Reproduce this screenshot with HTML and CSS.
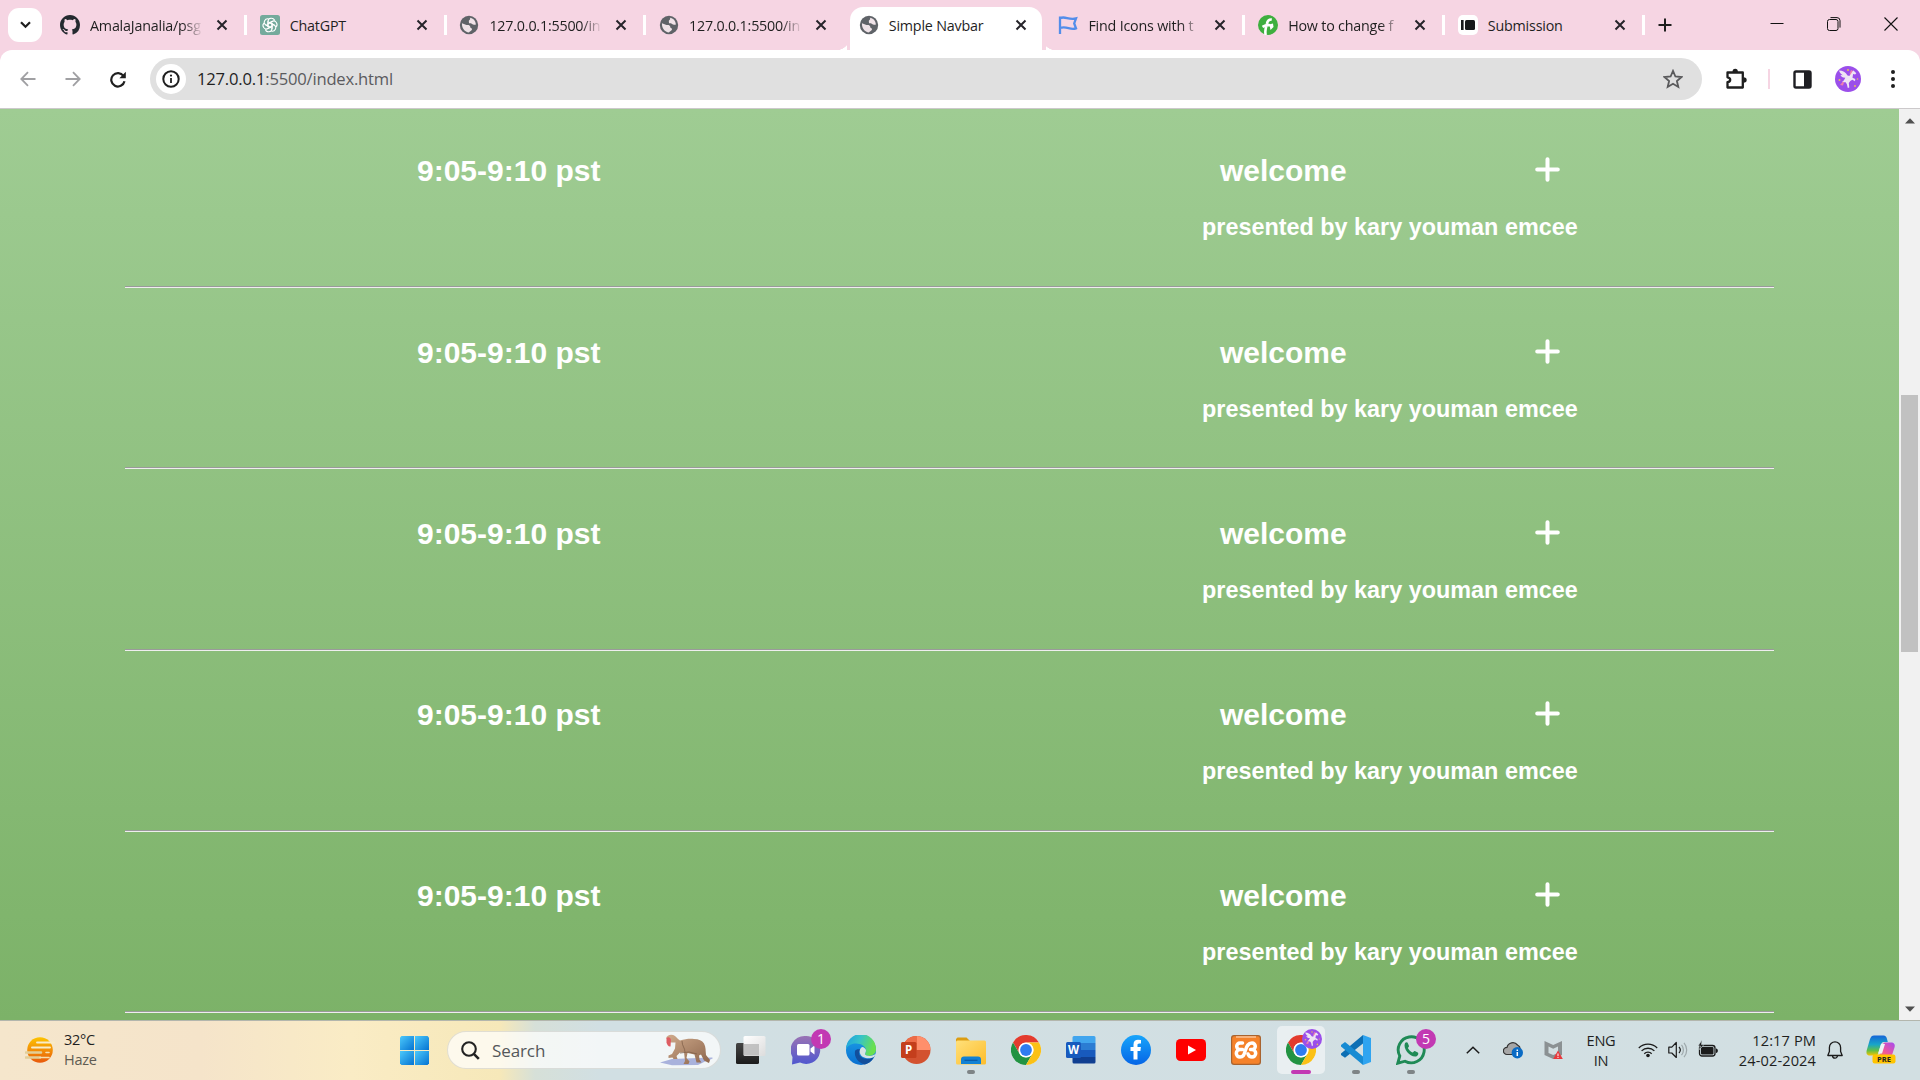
FILE: index.html
```html
<!DOCTYPE html>
<html lang="en">
<head>
<meta charset="utf-8">
<title>Simple Navbar</title>
<link rel="stylesheet" href="styles.css">
</head>
<body>
<svg class="defs" width="0" height="0" aria-hidden="true">
  <defs>
    <linearGradient id="gWin" x1="0" y1="0" x2="1" y2="1"><stop offset="0" stop-color="#4cc9fb"/><stop offset="1" stop-color="#0573d2"/></linearGradient>
    <linearGradient id="gSun" x1="0" y1="0" x2="0" y2="1"><stop offset="0" stop-color="#fdc400"/><stop offset="1" stop-color="#e8590c"/></linearGradient>
    <linearGradient id="gDark" x1="0" y1="0" x2="0" y2="1"><stop offset="0" stop-color="#454545"/><stop offset="1" stop-color="#1b1b1b"/></linearGradient>
    <linearGradient id="gLight" x1="0" y1="0" x2="1" y2="1"><stop offset="0" stop-color="#fff"/><stop offset="1" stop-color="#dcdcdc"/></linearGradient>
    <linearGradient id="gTeams" x1="0" y1="0" x2="0" y2="1"><stop offset="0" stop-color="#9a73b4"/><stop offset="1" stop-color="#4f57cf"/></linearGradient>
    <linearGradient id="gEdgeTop" x1="0" y1="0" x2="1" y2=".3"><stop offset="0" stop-color="#1b9de2"/><stop offset=".5" stop-color="#36c3c8"/><stop offset="1" stop-color="#6ae04e"/></linearGradient>
    <linearGradient id="gEdge" x1="0" y1="0" x2="0" y2="1"><stop offset="0" stop-color="#1ca0e8"/><stop offset="1" stop-color="#0a6fd0"/></linearGradient>
    <linearGradient id="gFolder" x1="0" y1="0" x2="1" y2="1"><stop offset="0" stop-color="#ffe07a"/><stop offset="1" stop-color="#fdbd2c"/></linearGradient>
    <linearGradient id="gFb" x1="0" y1="0" x2="0" y2="1"><stop offset="0" stop-color="#18a5fb"/><stop offset="1" stop-color="#0565e6"/></linearGradient>
    <linearGradient id="gCop1" x1="0" y1="0" x2="0" y2="1"><stop offset="0" stop-color="#1565d8"/><stop offset=".45" stop-color="#18a5c8"/><stop offset=".75" stop-color="#62bf46"/><stop offset="1" stop-color="#f5c400"/></linearGradient>
    <linearGradient id="gCop2" x1="1" y1="0" x2="0" y2="1"><stop offset="0" stop-color="#a44cf0"/><stop offset=".55" stop-color="#f0569c"/><stop offset="1" stop-color="#fb8a3c"/></linearGradient>
    <linearGradient id="gMonkey" x1="0" y1="0" x2="1" y2="1"><stop offset="0" stop-color="#d0ab8c"/><stop offset="1" stop-color="#8c654c"/></linearGradient>
    <symbol id="close" viewBox="0 0 12 12"><path d="M1.500 1.500l9 9M10.500 1.500l-9 9" stroke="#26242a" stroke-width="2" fill="none"/></symbol>
    <symbol id="globe" viewBox="0 0 20 20"><circle cx="10" cy="10" r="9.200" fill="#5f6368"/><path d="M3 8.200l3.800 1.600c1.600.6 2.300-.2 3.600.6 1.300.9.600 2.600 2 2.900 1.300.4.400 2.400-1 2.900-1 .4-.800 1-2 1.200C5.500 16.500 2.600 13 3 8.200z" fill="#efe3e8"/><path d="M10.800 2.800c1.200 1.200-.2 2-.8 2.700-.7.900.5 1.500-.2 2.200.8.900 2.400.2 3.100 1.100.700 1 2.300 1.100 4 .7C16.500 5.700 14.200 3.200 10.800 2.800z" fill="#efe3e8"/></symbol>
    <symbol id="chrome" viewBox="0 0 30 30">
      <circle cx="15" cy="15" r="15" fill="#fff"/>
      <path d="M2 7.500A15 15 0 0 1 28 7.500H15A7.500 7.500 0 0 0 8.500 18.700z" fill="#e33b2e"/>
      <path d="M2 7.500A15 15 0 0 0 15 30l6.500-11.200A7.500 7.500 0 0 1 8.500 18.700z" fill="#229342"/>
      <path d="M28 7.500A15 15 0 0 1 15 30l6.500-11.200A7.500 7.500 0 0 0 15 7.500z" fill="#fbc116"/>
      <circle cx="15" cy="15" r="7.300" fill="#fff"/><circle cx="15" cy="15" r="5.900" fill="#2f7cf0"/>
    </symbol>
    <symbol id="pegasus" viewBox="0 0 26 26"><circle cx="13" cy="13" r="13" fill="#9b4fea"/><path d="M4 4.500c4 0 6.500 1.500 8.500 5l2 .5 1.500-4 2.500-1.500 2.800 2.800-1.200 1.200-2-.4-.6 3.600 2.800 1.200-.3 2.300-2.700-1.500-2 1.300-1.500 2 .5 4.500-1.500.5-1-4-1.500-2c-1 .5-2 .5-3.300 0 1.500-1 2.500-2.500 3.300-4.300C7.500 11.700 6 10.500 5.500 9l2.300.3C6 8 4.600 6.500 4 4.500z" fill="#eee5f3"/><path d="M14.500 8l1.500-4 1.800.8-2.300 4zM8 15.500l-3 3.500 3 .5 1-3z" fill="#ef7fae"/><g fill="#e5bf5a"><circle cx="4.500" cy="14" r="1"/><circle cx="20" cy="20" r="1"/><circle cx="13" cy="4" r="1"/><circle cx="22.500" cy="13" r=".8"/></g></symbol>
  </defs>
</svg>

<header class="tabstrip">
  <div class="tab-search"><svg width="11" height="8" viewBox="0 0 11 8"><path d="M1 1.200l4.500 4.600L10 1.200" fill="none" stroke="#1f1f1f" stroke-width="2.200"/></svg></div>
  <div class="tabs">
    <div class="tab">
      <svg class="favicon" viewBox="0 0 16 16"><path fill="#24292f" d="M8 0C3.580 0 0 3.580 0 8c0 3.540 2.290 6.530 5.470 7.590.4.070.55-.17.55-.38 0-.19-.01-.82-.01-1.490-2.010.37-2.530-.49-2.690-.94-.09-.23-.48-.94-.82-1.130-.28-.15-.68-.52-.01-.53.63-.01 1.080.58 1.230.82.72 1.210 1.870.87 2.330.66.07-.52.28-.87.51-1.070-1.780-.2-3.640-.89-3.640-3.950 0-.87.31-1.590.82-2.150-.08-.2-.36-1.020.08-2.120 0 0 .67-.21 2.200.82.64-.18 1.320-.27 2-.27s1.360.09 2 .27c1.530-1.040 2.200-.82 2.200-.82.44 1.100.16 1.920.08 2.120.51.56.82 1.270.82 2.150 0 3.070-1.870 3.750-3.650 3.950.29.25.54.73.54 1.480 0 1.070-.01 1.930-.01 2.200 0 .21.15.46.55.38A8.010 8.010 0 0 0 16 8c0-4.420-3.580-8-8-8z"/></svg>
      <span class="title fade">AmalaJanalia/psg</span><svg class="x"><use href="#close"/></svg>
    </div>
    <div class="tab">
      <svg class="favicon" viewBox="0 0 20 20"><rect width="20" height="20" rx="2.500" fill="#74aa9c"/><g fill="none" stroke="#fff" stroke-width="1.100"><path id="petal" d="M8 12.200V6.500c0-4.200 5.800-4.200 6.600-.8M8 8.800l4.500-2.500"/><use href="#petal" transform="rotate(60 10 10)"/><use href="#petal" transform="rotate(120 10 10)"/><use href="#petal" transform="rotate(180 10 10)"/><use href="#petal" transform="rotate(240 10 10)"/><use href="#petal" transform="rotate(300 10 10)"/></g></svg>
      <span class="title">ChatGPT</span><svg class="x"><use href="#close"/></svg>
    </div>
    <div class="tab"><svg class="favicon"><use href="#globe"/></svg><span class="title fade">127.0.0.1:5500/in</span><svg class="x"><use href="#close"/></svg></div>
    <div class="tab plain"><svg class="favicon"><use href="#globe"/></svg><span class="title fade">127.0.0.1:5500/in</span><svg class="x"><use href="#close"/></svg></div>
    <div class="tab active"><svg class="favicon"><use href="#globe"/></svg><span class="title">Simple Navbar</span><svg class="x"><use href="#close"/></svg></div>
    <div class="tab">
      <svg class="favicon" viewBox="0 0 20 20"><path d="M2 1.500v17.500M2 3.200c5-2.700 8.500 2.200 16 .2l-1.800 5 1.800 5c-6 2.200-9-2.700-16-.4" fill="none" stroke="#538dea" stroke-width="2.300"/></svg>
      <span class="title fade">Find Icons with t</span><svg class="x"><use href="#close"/></svg>
    </div>
    <div class="tab">
      <svg class="favicon" viewBox="0 0 20 20"><circle cx="10" cy="10" r="10" fill="#3eaf3f"/><path d="M7.800 20c-1.500-4 .4-8 1.200-11.500.6-3 2.200-4.200 4.800-4M4.500 11.800c2.500-1.500 5-2 8-1.500" fill="none" stroke="#fff" stroke-width="2.600"/><path d="M11.500 9.500l3.500-1 .5 3.500-3 3z" fill="#fff"/></svg>
      <span class="title fade">How to change f</span><svg class="x"><use href="#close"/></svg>
    </div>
    <div class="tab">
      <svg class="favicon" viewBox="0 0 20 20"><rect width="20" height="20" rx="5" fill="#fff"/><rect x="3" y="5" width="2.600" height="10" fill="#17181a"/><rect x="7" y="5" width="10" height="10" rx="1.500" fill="#17181a"/></svg>
      <span class="title">Submission</span><svg class="x"><use href="#close"/></svg>
    </div>
  </div>
  <svg class="newtab" width="14" height="14" viewBox="0 0 14 14"><path d="M7 .5v13M.5 7h13" stroke="#1f1f1f" stroke-width="2"/></svg>
  <div class="win-controls">
    <svg width="14" height="14" viewBox="0 0 14 14"><path d="M.5 6.500h13" stroke="#111" stroke-width="1"/></svg>
    <svg width="14" height="14" viewBox="0 0 14 14" fill="none" stroke="#111"><rect x=".5" y="2.500" width="10.500" height="11" rx="2"/><path d="M3.500.6h6.500a3 3 0 0 1 3 3v7"/></svg>
    <svg width="14" height="14" viewBox="0 0 14 14"><path d="M.5.500l13 13M13.500.5l-13 13" stroke="#111" stroke-width="1.100"/></svg>
  </div>
</header>

<nav class="toolbar">
  <div class="nav-buttons">
    <svg width="16" height="16" viewBox="0 0 16 16"><path d="M15.500 8H1.500M8 1.200L1.300 8 8 14.800" fill="none" stroke="#a0a0a3" stroke-width="1.800"/></svg>
    <svg width="16" height="16" viewBox="0 0 16 16"><path d="M.5 8h14M8 1.200L14.700 8 8 14.800" fill="none" stroke="#a0a0a3" stroke-width="1.800"/></svg>
    <svg width="17" height="17" viewBox="0 0 17 17"><path d="M13.500 5A6.700 6.700 0 1 0 14.500 10.300" fill="none" stroke="#1f1f1f" stroke-width="2.200"/><path d="M15.800.8v6.400H9.400z" fill="#1f1f1f"/></svg>
  </div>
  <div class="omnibox">
    <span class="info"><svg width="18" height="18" viewBox="0 0 18 18"><circle cx="9" cy="9" r="7.700" fill="none" stroke="#1f1f1f" stroke-width="2"/><path d="M9 8v5" stroke="#1f1f1f" stroke-width="1.800"/><circle cx="9" cy="5.600" r="1.100" fill="#1f1f1f"/></svg></span>
    <span class="url"><b>127.0.0.1</b>:5500/index.html</span>
    <svg class="star" width="20" height="20" viewBox="0 0 20 20"><path d="M10 1.900l2.400 5.600 6.100.5-4.600 4 1.400 6-5.300-3.200-5.300 3.200 1.400-6-4.600-4 6.100-.5z" fill="none" stroke="#5a5a5c" stroke-width="1.800"/></svg>
  </div>
  <div class="actions">
    <svg width="22" height="22" viewBox="0 0 22 22"><path d="M2.500 4.500h15.300v15H2.500v-5.300c3.600-.5 3.600-4.400 0-4.900z" fill="none" stroke="#1f1f1f" stroke-width="2.300" stroke-linejoin="round"/><path d="M7.500 4a2.700 3.200 0 0 1 5.400 0zM18.500 9.300a3.200 2.700 0 0 1 0 5.400z" fill="#1f1f1f"/></svg>
    <span class="divider"></span>
    <svg width="19" height="19" viewBox="0 0 19 19"><rect x="1.500" y="1.500" width="16" height="16" rx="1.500" fill="#fff" stroke="#1f1f23" stroke-width="2.400"/><path d="M11 1h7v17h-7z" fill="#1f1f23"/></svg>
    <svg width="26" height="26"><use href="#pegasus"/></svg>
    <svg width="4" height="18" viewBox="0 0 4 18" fill="#1f1f1f"><circle cx="2" cy="2" r="2"/><circle cx="2" cy="9" r="2"/><circle cx="2" cy="16" r="2"/></svg>
  </div>
</nav>

<div class="viewport">
  <main class="schedule">
    <section class="slot"><h2 class="time">9:05-9:10 pst</h2><h2 class="event">welcome</h2><svg class="plus" viewBox="0 0 25 25"><path d="M12.500 2.200v20.600M2.200 12.500h20.600"/></svg><h3 class="host">presented by kary youman emcee</h3></section>
    <section class="slot"><h2 class="time">9:05-9:10 pst</h2><h2 class="event">welcome</h2><svg class="plus" viewBox="0 0 25 25"><path d="M12.500 2.200v20.600M2.200 12.500h20.600"/></svg><h3 class="host">presented by kary youman emcee</h3></section>
    <section class="slot"><h2 class="time">9:05-9:10 pst</h2><h2 class="event">welcome</h2><svg class="plus" viewBox="0 0 25 25"><path d="M12.500 2.200v20.600M2.200 12.500h20.600"/></svg><h3 class="host">presented by kary youman emcee</h3></section>
    <section class="slot"><h2 class="time">9:05-9:10 pst</h2><h2 class="event">welcome</h2><svg class="plus" viewBox="0 0 25 25"><path d="M12.500 2.200v20.600M2.200 12.500h20.600"/></svg><h3 class="host">presented by kary youman emcee</h3></section>
    <section class="slot"><h2 class="time">9:05-9:10 pst</h2><h2 class="event">welcome</h2><svg class="plus" viewBox="0 0 25 25"><path d="M12.500 2.200v20.600M2.200 12.500h20.600"/></svg><h3 class="host">presented by kary youman emcee</h3></section>
  </main>
  <aside class="scrollbar">
    <svg width="10" height="6" viewBox="0 0 10 6"><path d="M0 5.500L5 .3l5 5.200z" fill="#505050"/></svg>
    <div class="track"><div class="thumb"></div></div>
    <svg width="10" height="6" viewBox="0 0 10 6"><path d="M0 .5l5 5.200L10 .5z" fill="#505050"/></svg>
  </aside>
</div>

<footer class="taskbar">
  <div class="weather">
    <svg width="30" height="28" viewBox="0 0 30 28"><circle cx="15" cy="14" r="12.800" fill="url(#gSun)"/><g stroke-linecap="round" fill="none"><path d="M12 6.500h17M7 11.500h18" stroke="#f8ecc9" stroke-width="1.900"/><path d="M1 16.500h15M1 21.500h14" stroke="#e2ce98" stroke-width="2.600"/><path d="M15 21.500h9M21 16.500h3" stroke="#f6dfae" stroke-width="1.600"/></g></svg>
    <p>32°C<br><span>Haze</span></p>
  </div>
  <svg class="start" width="29" height="29" viewBox="0 0 29 29"><g fill="url(#gWin)"><path d="M1.500 0H14v14H0V1.500z"/><path d="M15 0h12.500L29 1.500V14H15z"/><path d="M0 15h14v14H1.500L0 27.500z"/><path d="M15 15h14v12.500L27.500 29H15z"/></g></svg>
  <div class="search">
    <svg width="19" height="19" viewBox="0 0 19 19"><circle cx="8" cy="8" r="6.800" fill="none" stroke="#222" stroke-width="2.100"/><path d="M12.800 12.800l5 5" stroke="#222" stroke-width="2.600"/></svg>
    <span>Search</span>
    <svg class="monkey" width="54" height="34" viewBox="0 0 54 34"><path d="M0 29.500l12-3.500 40-1.500c3 1-4 3-6 3.500l-8 4-26 .3z" fill="#a9b2dc"/><path d="M6 5.500C7 1.500 12 1 15 3c2 1.500 3 3.500 5 4.500 5-1.500 10-2 14-1.500 5 0 8 1.500 10 4.500 2 3.500 1.500 7.500 2 11.500l4 5-1 3-5-2.500-3-6-2 1 .5 4 2 3h-5l-2-8-7-1.500-1 5 3 3.500-1 2.500h-5l1.500-3-1-9-4 .5-3.500 3.500 1 3h-4l-1-1.500-4 .5v-2.500l3.500-1.500 3-5.500.5-6c-4 .5-8-.5-8.500-4z" fill="url(#gMonkey)"/><path d="M6.500 5c2-1.500 4-.5 4.500 2l-.5 6.500c-2 .5-3.500-2-4-4z" fill="#de5c62"/><path d="M20 20l9-1 8 2M22 8c0 5 3 7 3 11" fill="none" stroke="#806049" stroke-width=".8"/></svg>
  </div>
  <div class="apps">
    <div class="app"><svg viewBox="0 0 30 30"><rect y="8" width="23" height="21" rx="1.500" fill="url(#gDark)"/><rect x="7.500" y="1" width="22" height="20" rx="1.500" fill="url(#gLight)"/><path d="M8 9h15v11.500H8z" fill="#b6b6b6" opacity=".8"/></svg></div>
    <div class="app"><svg viewBox="0 0 30 30"><path d="M14 1a14 14 0 1 1-5 26.500L1 29.500 1.500 22A14 14 0 0 1 14 1z" fill="url(#gTeams)"/><rect x="6" y="9" width="12.500" height="11.500" rx="1.500" fill="#fff"/><path d="M19.500 13.500l4-3v9l-4-3z" fill="#fff"/></svg><span class="badge">1</span></div>
    <div class="app"><svg viewBox="0 0 30 30"><circle cx="15" cy="15" r="15" fill="url(#gEdge)"/><path d="M0 14A15 15 0 0 1 30 14c.3 6-5.500 8-9.500 6.500-3-1.200-.5-2.500-.5-5C20 8 5 5 0 14z" fill="url(#gEdgeTop)"/><path d="M9 16c-1 6 3 12 10 13.400 5-1.400 7.500-4.400 9-7.400-5 3-12 2.500-14.500-2-1-2 0-4.500 1.500-5.500-3-.7-5.400 0-6 1.500z" fill="#124f9c"/><path d="M16 12c-3.500 2.500-3 8 1 10 4 2 8 1.300 11 0l2.500-4c-2.500 2.500-6 3.500-10 2.500-3-1.200-.5-2.500-.5-5 0-1.500-2-3.500-4-3.500z" fill="#d6e2e4"/></svg></div>
    <div class="app"><svg viewBox="0 0 30 30"><circle cx="15.500" cy="15" r="14" fill="#d35230"/><path d="M15.500 1a14 14 0 0 1 14 14h-14z" fill="#ff8f6b"/><path d="M15.500 1v14h-14a14 14 0 0 1 14-14z" fill="#ed6c47"/><rect y="7" width="15.500" height="16" rx="1.500" fill="#c43e1c"/><text x="7.600" y="19.300" class="letter">P</text></svg></div>
    <div class="app"><svg viewBox="0 0 30 30"><path d="M1.500 2.500h9l3 3v4H0V4z" fill="#dc9d12"/><rect y="5.500" width="30" height="24" rx="1.500" fill="url(#gFolder)"/><path d="M5 29v-4.500a3 3 0 0 1 3-3h14a3 3 0 0 1 3 3V29z" fill="#1181d4"/><path d="M8.500 25.300h13" stroke="#0a58a4" stroke-width="1.200"/></svg><i class="dot"></i></div>
    <div class="app"><svg><use href="#chrome"/></svg></div>
    <div class="app"><svg viewBox="0 0 30 30"><path d="M6.500 2.500A1.500 1.500 0 0 1 8 1h20a1.500 1.500 0 0 1 1.500 1.500V8h-23z" fill="#41a5ee"/><path d="M6.500 8h23v7h-23z" fill="#2b7cd3"/><path d="M6.500 15h23v7h-23z" fill="#185abd"/><path d="M6.500 22h23v5a1.500 1.500 0 0 1-1.500 1.500H8A1.500 1.500 0 0 1 6.500 27z" fill="#103f91"/><rect y="7" width="15" height="16" rx="1.500" fill="#185abd"/><text x="7.500" y="19" class="letter">W</text></svg></div>
    <div class="app"><svg viewBox="0 0 30 30"><circle cx="15" cy="15" r="15" fill="url(#gFb)"/><path d="M12.500 24.500V16h-3v-4h3V9.500c0-3.300 2-4.700 4.500-4.700l3 .2v3.400h-1.700c-1.500 0-1.800.8-1.800 1.800V12h3.400l-.5 4h-2.900v8.500z" fill="#fff"/></svg></div>
    <div class="app"><svg viewBox="0 0 30 30"><rect y="4" width="30" height="22" rx="4.500" fill="#f00"/><path d="M12 10.500l8 4.500-8 4.500z" fill="#fff"/></svg></div>
    <div class="app"><svg viewBox="0 0 30 30"><rect width="30" height="30" rx="3" fill="#a8632f"/><rect x="1.200" y="1.200" width="27.600" height="27.600" rx="2" fill="#f5822a"/><path d="M5 2h20" stroke="#f8b27c" stroke-width="2"/><path d="M11.500 8H9a3.200 3.200 0 0 0 0 6.600h2.500M9 14.600a3.700 3.700 0 0 0 0 7.400c4 0 4-3 5.500-7 1.300-4 2.500-7 6.500-7a3.300 3.300 0 0 1 0 6.600h-1.500M21 14.600a3.700 3.700 0 0 1 0 7.400c-2.500 0-3.500-1.500-4-3" fill="none" stroke="#fff" stroke-width="3.500" stroke-linejoin="round" stroke-linecap="round"/></svg></div>
    <div class="app current"><svg><use href="#chrome"/></svg><svg class="profile"><use href="#pegasus"/></svg><i class="bar"></i></div>
    <div class="app"><svg viewBox="0 0 30 30"><path d="M22 0l8 3v24l-8 3z" fill="#2fa4f0"/><path d="M22 0v8.500L4 22.800 0 20v-1.500z" fill="#0d6fb4"/><path d="M0 10l4-3 18 14.500V30L0 11.500z" fill="#178bd3"/></svg><i class="dot"></i></div>
    <div class="app"><svg viewBox="0 0 30 30"><path d="M1.800 28.200l2-7.200a13 13 0 1 1 5.200 5.200z" fill="none" stroke="#1f8a56" stroke-width="2.900"/><path d="M9 8c1.500-1.200 2.500-.8 3 .5l1 2.500c0 1-1.200 1.500-1 2.300 1 2 2.500 3.300 4.500 4.200 1 0 1.300-1.800 2.300-1.500l3 1.500c1.300 1 0 3.500-1.800 4C14.500 22.500 6.500 14 9 8z" fill="#1f8a56"/></svg><span class="badge">5</span><i class="dot"></i></div>
  </div>
  <div class="tray">
    <svg class="caret" width="14" height="8" viewBox="0 0 14 8"><path d="M.8 7.200L7 1.200l6.200 6" fill="none" stroke="#1b1b1b" stroke-width="1.500"/></svg>
    <svg width="20" height="18" viewBox="0 0 20 18"><path d="M4 13.500A3.600 3.600 0 0 1 4 6.300 6 6 0 0 1 14.500 4c2 1 3 3 2.500 5v4.500z" fill="#a6a6a6" stroke="#333" stroke-width="1.200"/><circle cx="14.300" cy="11.800" r="5.700" fill="#0a6bc4"/><path d="M14.300 11v4M14.300 8.500v1.500" stroke="#fff" stroke-width="1.500"/></svg>
    <svg width="19" height="20" viewBox="0 0 19 20"><path d="M.5 1l8.700 4L18 1v14l-8.800 4L.5 15z" fill="#8b9193"/><path d="M4.500 6.500l4.700 2.200L14 6.500V13l-4.800 2-4.700-2z" fill="#d3dfe2"/><path d="M14 10.500l4.800 8.500H9.200z" fill="#e9393c"/><path d="M14 13.500v2.700M14 17v1" stroke="#fff" stroke-width="1"/></svg>
    <p class="lang">ENG<br>IN</p>
    <svg width="20" height="16" viewBox="0 0 20 16"><g fill="none" stroke="#1b1b1b" stroke-width="1.300"><path d="M.8 6a13 13 0 0 1 18.400 0M3.600 8.900a9.100 9.100 0 0 1 12.800 0M6.300 11.700a5.200 5.200 0 0 1 7.400 0"/></g><circle cx="10" cy="13.500" r="1.800" fill="#1b1b1b"/></svg>
    <svg width="20" height="18" viewBox="0 0 20 18"><path d="M.8 6.200h3l4.500-4.700v15L3.800 12h-3z" fill="none" stroke="#1b1b1b" stroke-width="1.200" stroke-linejoin="round"/><path d="M11 6a4.500 4.500 0 0 1 0 6" fill="none" stroke="#1b1b1b" stroke-width="1.200"/><path d="M13.500 3.800a8 8 0 0 1 0 10.400M16 1.800a11 11 0 0 1 0 14.400" fill="none" stroke="#9da7aa" stroke-width="1.200"/></svg>
    <svg class="battery" width="20" height="18" viewBox="0 0 20 18"><rect x="1.500" y="5.500" width="15.500" height="10.500" rx="2.500" fill="none" stroke="#1b1b1b" stroke-width="1.300"/><rect x="3" y="7" width="12.500" height="7.500" rx="1" fill="#1b1b1b"/><path d="M18 8.500c2.500.5 2.500 4 0 4.500z" fill="#1b1b1b"/><path d="M4 0L0 6h2.500L1.500 9.500 6 4.500H3.500z" fill="#1b1b1b" stroke="#d2dfe2" stroke-width=".6"/></svg>
    <p class="clock">12:17 PM<br>24-02-2024</p>
    <svg class="bell" width="16" height="18" viewBox="0 0 16 18"><path d="M8 .8a5.600 5.600 0 0 0-5.600 5.600v4L.8 14.500h14.400l-1.600-4.100v-4A5.600 5.600 0 0 0 8 .8zM5.500 14.500a2.500 2.700 0 0 0 5 0" fill="none" stroke="#1b1b1b" stroke-width="1.300" stroke-linejoin="round"/></svg>
    <svg class="copilot" width="30" height="29" viewBox="0 0 30 29"><path d="M8 .5h9.500c2 0 3 1.500 3.500 3.500l.8 3H18c-2 0-2.800 1.500-3.500 4l-2 7c-.5 2-2 2.500-3.500 2.500H4C.5 20.500 0 18 .8 15L4 4C5 1.500 6 .5 8 .5z" fill="url(#gCop1)"/><path d="M19 7.500h6c3 0 4.500 2 3.500 5L26 20c-.5 2-2 3-4 3h-9.500c-2 0-2.500-1-2-2.500 2 0 3.500-.5 4-2.500l2.300-8c.3-1.500 1-2.500 2.200-2.500z" fill="url(#gCop2)"/><path d="M15 9h4l-3 9.500h-4z" fill="#eef4f6"/><rect x="6.500" y="19.500" width="23" height="9" rx="2.200" fill="#ffc400"/><text x="18" y="26.600" class="pre">PRE</text></svg>
  </div>
</footer>
</body>
</html>
```
FILE: styles.css
```css
* { box-sizing: border-box; }
body {
  margin: 0;
  width: 1920px;
  height: 1080px;
  overflow: hidden;
  display: flex;
  flex-direction: column;
  font-family: "Open Sans", "Noto Sans", sans-serif;
  color: #1f1f1f;
  background: #f6d5e3;
}
svg { display: block; flex: none; }
.defs { position: absolute; }
p, h2, h3 { margin: 0; }

/* Tab strip */
.tabstrip {
  height: 50px;
  display: flex;
  align-items: center;
  background: #f6d5e3;
}
.tab-search {
  width: 34px;
  height: 34px;
  margin: 0 6px 0 8px;
  border-radius: 11px;
  background: #fff;
  display: grid;
  place-items: center;
}
.tabs { display: flex; align-self: stretch; }
.tab {
  position: relative;
  width: 199.7px;
  display: flex;
  align-items: center;
  padding-left: 12px;
}
.tab::after {
  content: "";
  width: 3px;
  height: 20px;
  margin-left: 16px;
  background: #fff;
}
.tab.plain::after, .tab.active::after { display: none; }
.favicon { width: 20px; height: 20px; margin-right: 10px; }
.title {
  width: 113px;
  overflow: hidden;
  white-space: nowrap;
  font-size: 14.3px;
  letter-spacing: -.2px;
}
.fade { -webkit-mask-image: linear-gradient(90deg, #000 82%, transparent); mask-image: linear-gradient(90deg, #000 82%, transparent); }
.x { width: 12px; height: 12px; margin-left: 13px; }
.tab.active {
  margin: 7px 0 0;
  padding: 0 0 7px 12px;
}
.tab.active > * { position: relative; }
.tab.active::before {
  content: "";
  position: absolute;
  inset: 0 4px 0 3px;
  background: #fff;
  border-radius: 13px 13px 0 0;
}
/* Outward curves where the active tab meets its neighbours */
.tab.plain, .tab.active + .tab {
  background: radial-gradient(circle at 0 0, transparent 14px, #fff 14.500px) right -3px bottom / 14px 14px no-repeat;
}
.tab.active + .tab {
  background: radial-gradient(circle at 100% 0, transparent 14px, #fff 14.500px) -4px 100% / 14px 14px no-repeat;
}
.newtab { margin: 0 0 0 12px; }
.win-controls { margin: 0 0 2px auto; display: flex; gap: 43px; padding-right: 22px; }

/* Toolbar */
.toolbar {
  height: 59px;
  display: flex;
  align-items: center;
  background: #fff;
  border-bottom: 1px solid #ccc9cb;
  border-radius: 12px 12px 0 0;
}
.nav-buttons {
  width: 150px;
  display: flex;
  align-items: center;
  gap: 29px;
  padding-left: 20px;
}
.omnibox {
  width: 1552px;
  height: 42px;
  border-radius: 21px;
  background: #e0e0e0;
  display: flex;
  align-items: center;
  padding: 0 19px 0 6px;
}
.info {
  width: 30px;
  height: 30px;
  border-radius: 50%;
  background: #fff;
  display: grid;
  place-items: center;
}
.url { margin: -1px 0 0 11px; font-size: 16.6px; letter-spacing: -.2px; color: #5b5b5e; }
.url b { font-weight: 400; color: #1f1f1f; }
.star { margin-left: auto; }
.actions { flex: 1; display: flex; align-items: center; padding-left: 23px; }
.divider { width: 2px; height: 20px; margin: 0 23px 0 21px; background: #f6d5e3; }
.actions svg:nth-of-type(3) { margin: 0 30px 0 23px; }

/* Page */
.viewport { height: 911px; display: flex; }
.schedule {
  flex: 1;
  overflow: hidden;
  padding: 0 125px;
  background: linear-gradient(#9fcc93, #7cb268);
  font-family: "Liberation Sans", Arial, sans-serif;
  color: #fff;
}
.slot {
  height: 181px;
  display: grid;
  grid-template-columns: 804px 315px 1fr;
  grid-template-rows: 36px 28px;
  row-gap: 24px;
  padding: 46px 0 0 291px;
  border-bottom: 1px solid #eee;
  box-shadow: inset 0 -1px #9a9a9a;
}
.slot:nth-child(1) { height: 179px; padding-top: 44px; }
.slot:nth-child(2) { padding-top: 47px; }
.slot:nth-child(3) { height: 182px; padding-top: 47px; }
h2 { font-size: 30px; line-height: 36px; }
h3 { font-size: 23.4px; line-height: 28px; }
.time { padding-left: 1px; }
.plus { width: 25px; height: 25px; margin-top: 4px; }
.plus path { stroke: #fff; stroke-width: 4; stroke-linecap: round; }
.host { grid-column: 2 / 4; margin-left: -18px; white-space: nowrap; }

.scrollbar {
  width: 21px;
  background: #f1f1f1;
  display: flex;
  flex-direction: column;
  align-items: center;
  padding: 9px 0 8px;
}
.track { flex: 1; width: 17px; padding-top: 271px; }
.thumb { height: 257px; background: #c1c1c1; }

/* Taskbar */
.taskbar {
  height: 60px;
  display: flex;
  align-items: center;
  border-top: 1px solid #b3b6ad;
  background: linear-gradient(90deg, #f5e6cc 0, #f5e4ca 200px, #faecc5 350px, #f6e8b9 500px, #d6e0d8 535px, #d1dfe3 600px, #d2dfe2 100%);
}
.weather {
  width: 400px;
  display: flex;
  align-items: center;
  gap: 9px;
  padding: 0 0 2px 25px;
  font-size: 14.500px;
  line-height: 20px;
  letter-spacing: -.3px;
}
.weather span { color: #5f5b52; }
.start { margin-bottom: 1px; }
.search {
  width: 274px;
  height: 38px;
  margin: 0 2px 1px 18px;
  border-radius: 19px;
  background: rgba(255, 255, 255, .72);
  border: 1px solid rgba(140, 140, 130, .25);
  display: flex;
  align-items: center;
  padding: 0 6px 0 13px;
}
.search span { margin-left: 12px; font-size: 17px; letter-spacing: -.1px; color: #54575a; }
.monkey { margin-left: auto; }
.apps { display: flex; margin-bottom: 1px; }
.app {
  position: relative;
  width: 55px;
  height: 48px;
  display: grid;
  place-items: center;
}
.app svg { width: 30px; height: 30px; }
.letter { font: bold 11.500px "Open Sans", sans-serif; fill: #fff; text-anchor: middle; }
.badge {
  position: absolute;
  left: 33px;
  top: 3px;
  width: 20px;
  height: 20px;
  border-radius: 50%;
  background: #c239b3;
  color: #fff;
  font-size: 14px;
  line-height: 20px;
  text-align: center;
}
.dot, .bar {
  position: absolute;
  left: 24px;
  bottom: 0;
  width: 8px;
  height: 4px;
  border-radius: 2px;
  background: #7e8486;
}
.current { width: 48px; margin: 0 3px 0 4px; border-radius: 5px; background: #e9eff1; }
.current .bar { left: 14px; width: 20px; background: #c239b3; }
.app .profile { position: absolute; left: 25px; top: 3px; width: 20px; height: 20px; }
.tray { flex: 1; display: flex; align-items: center; font-size: 14.600px; line-height: 20px; padding-bottom: 2px; }
.tray > :nth-child(1) { margin-left: 28px; }
.tray > :nth-child(2) { margin-left: 23px; }
.tray > :nth-child(3) { margin-left: 21px; }
.lang { width: 60px; margin-left: 8px; text-align: center; letter-spacing: -.3px; }
.tray > :nth-child(5) { margin-left: 7px; }
.tray > :nth-child(6) { margin-left: 10px; }
.tray > :nth-child(7) { margin: -2px 0 0 10px; }
.clock { width: 98px; text-align: right; letter-spacing: .1px; }
.bell { margin-left: 11px; }
.copilot { margin-left: 23px; }
.pre { font: bold 7.500px "Open Sans", sans-serif; text-anchor: middle; fill: #222; }
```
